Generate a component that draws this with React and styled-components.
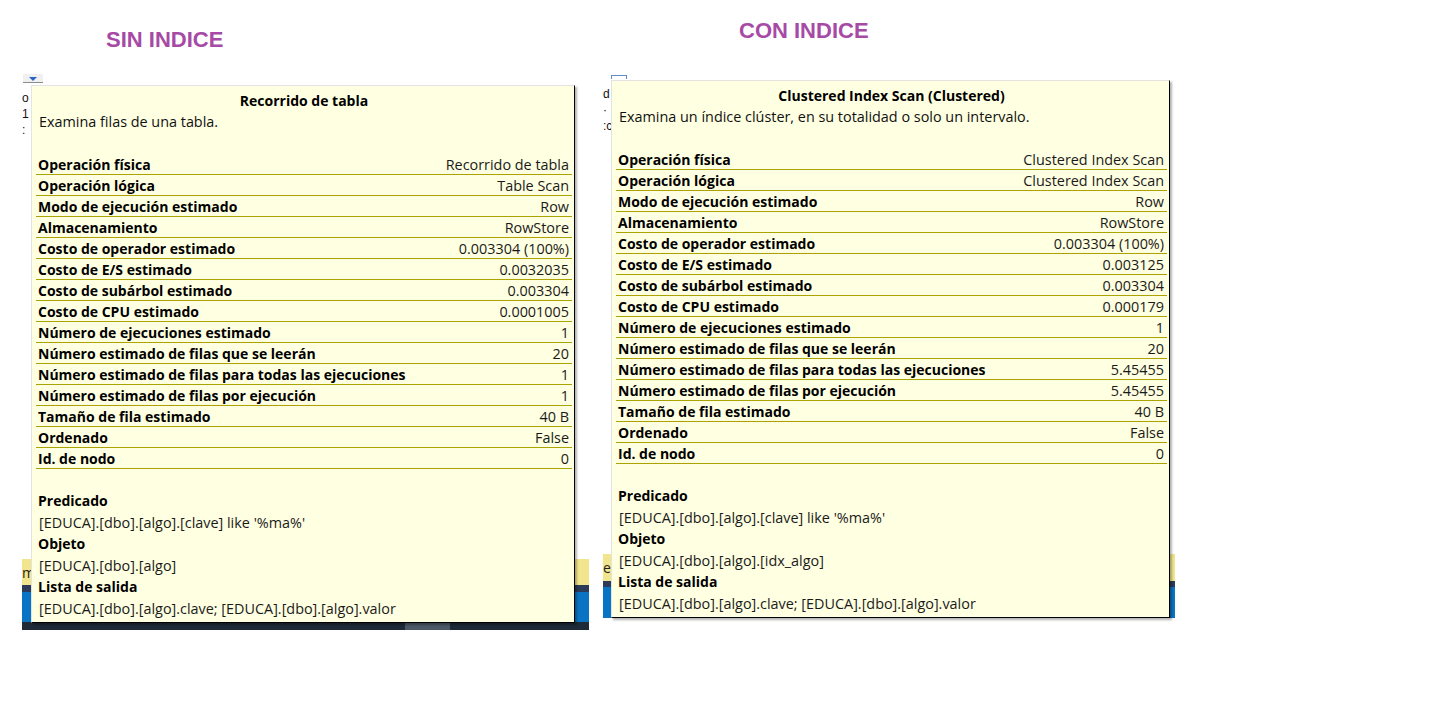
import React from "react";
import styled, { createGlobalStyle } from "styled-components";

const Global = createGlobalStyle`
  html, body { margin: 0; padding: 0; background: #fff; }
  body { font-family: "Open Sans", "Noto Sans", sans-serif; }
`;

const Page = styled.div`
  display: flex;
  align-items: flex-start;
  gap: 14px;
  padding-left: 22px;
  width: 1437px;
  height: 709px;
  box-sizing: border-box;
  overflow: hidden;
`;

const Column = styled.section`
  display: flex;
  flex-direction: column;
  width: ${(p) => p.$width}px;
`;

const HeadingBar = styled.div`
  height: 73px;
  box-sizing: border-box;
  padding-top: ${(p) => p.$top}px;
  padding-left: ${(p) => p.$indent}px;
`;

const Heading = styled.h2`
  margin: 0;
  font-family: "Liberation Sans", Arial, sans-serif;
  font-weight: bold;
  font-size: 22px;
  line-height: 26px;
  color: #a64aa6;
`;

const Frame = styled.div`
  position: relative;
  height: ${(p) => p.$height}px;
  display: flex;
  flex-direction: column;
  background: #fff;
`;

const FrameTop = styled.div`
  flex: 1;
  position: relative;
`;

const DropButton = styled.div`
  width: 20px;
  height: 9px;
  margin: 1px 0 0 1px;
  background: #f0f0f0;
  border-bottom: 1px solid #8c8c8c;
  display: flex;
  justify-content: center;
  align-items: flex-end;
  padding-bottom: 1px;
  box-sizing: border-box;
`;

const Tab = styled.div`
  width: 14px;
  height: 3px;
  margin: 2px 0 0 8px;
  border-top: 1px solid #5b8fd0;
  border-left: 1px solid #5b8fd0;
  border-right: 1px solid #5b8fd0;
`;

const Triangle = styled.span`
  width: 0;
  height: 0;
  border-left: 4px solid transparent;
  border-right: 4px solid transparent;
  border-top: 4px solid #2a64c8;
`;

const Fragments = styled.div`
  width: 9px;
  margin-top: ${(p) => p.$top}px;
  display: flex;
  flex-direction: column;
  gap: 2px;
  font-family: "Liberation Sans", Arial, sans-serif;
  font-size: 12px;
  line-height: 14px;
  color: #111;
  white-space: nowrap;
`;

const Strip = styled.div`
  height: ${(p) => p.$h}px;
  background: ${(p) => p.$c};
  display: flex;
  align-items: center;
  overflow: hidden;
  font-family: "Open Sans", sans-serif;
  font-size: 14px;
  color: #222;
`;

const ScrollTrack = styled.div`
  height: ${(p) => p.$h}px;
  background: #1e2a38;
  display: flex;
`;

const Thumb = styled.div`
  width: 45px;
  margin-left: 383px;
  background: #4c5866;
`;

const Tooltip = styled.div`
  position: absolute;
  left: ${(p) => p.$left}px;
  top: ${(p) => p.$top}px;
  width: ${(p) => p.$width}px;
  height: 538px;
  box-sizing: border-box;
  background: #ffffe1;
  border: 1px solid;
  border-color: #e3e3e3 #000 #000 #e3e3e3;
  box-shadow: 2px 2px 2px rgba(0, 0, 0, 0.3);
  padding: 4px 2px 0 4px;
  font-family: "Open Sans", "Noto Sans", sans-serif;
  font-size: 14.4px;
  color: #111;
`;

const Title = styled.div`
  height: 21px;
  line-height: 21px;
  text-align: center;
  font-weight: bold;
  font-size: 14px;
  color: #000;
`;

const Desc = styled.div`
  height: 21px;
  line-height: 21px;
  padding-left: 3px;
  margin-bottom: 22px;
`;

const PropRow = styled.div`
  display: flex;
  justify-content: space-between;
  align-items: flex-start;
  height: 20px;
  line-height: 22px;
  border-bottom: 1px solid #aca200;
  padding: 0 3px 0 2px;
`;

const Label = styled.span`
  font-weight: bold;
  font-size: 14px;
  color: #000;
`;

const Value = styled.span`
  color: #1a1a1a;
`;

const Section = styled.div`
  margin-top: 21px;
  padding-left: 2px;
  display: flex;
  flex-direction: column;
`;

const SectionLine = styled.div`
  height: 21.5px;
  line-height: 21.5px;
  white-space: nowrap;
  font-weight: ${(p) => (p.$bold ? "bold" : "normal")};
  font-size: ${(p) => (p.$bold ? "14px" : "14.4px")};
  color: ${(p) => (p.$bold ? "#000" : "#1a1a1a")};
  padding-left: ${(p) => (p.$bold ? 0 : 1)}px;
`;

const leftRows = [
  ["Operación física", "Recorrido de tabla"],
  ["Operación lógica", "Table Scan"],
  ["Modo de ejecución estimado", "Row"],
  ["Almacenamiento", "RowStore"],
  ["Costo de operador estimado", "0.003304 (100%)"],
  ["Costo de E/S estimado", "0.0032035"],
  ["Costo de subárbol estimado", "0.003304"],
  ["Costo de CPU estimado", "0.0001005"],
  ["Número de ejecuciones estimado", "1"],
  ["Número estimado de filas que se leerán", "20"],
  ["Número estimado de filas para todas las ejecuciones", "1"],
  ["Número estimado de filas por ejecución", "1"],
  ["Tamaño de fila estimado", "40 B"],
  ["Ordenado", "False"],
  ["Id. de nodo", "0"],
];

const rightRows = [
  ["Operación física", "Clustered Index Scan"],
  ["Operación lógica", "Clustered Index Scan"],
  ["Modo de ejecución estimado", "Row"],
  ["Almacenamiento", "RowStore"],
  ["Costo de operador estimado", "0.003304 (100%)"],
  ["Costo de E/S estimado", "0.003125"],
  ["Costo de subárbol estimado", "0.003304"],
  ["Costo de CPU estimado", "0.000179"],
  ["Número de ejecuciones estimado", "1"],
  ["Número estimado de filas que se leerán", "20"],
  ["Número estimado de filas para todas las ejecuciones", "5.45455"],
  ["Número estimado de filas por ejecución", "5.45455"],
  ["Tamaño de fila estimado", "40 B"],
  ["Ordenado", "False"],
  ["Id. de nodo", "0"],
];

function PlanTooltip({ left, top, width, title, desc, rows, objeto }) {
  return (
    <Tooltip $left={left} $top={top} $width={width}>
      <Title>{title}</Title>
      <Desc>{desc}</Desc>
      {rows.map(([k, v]) => (
        <PropRow key={k}>
          <Label>{k}</Label>
          <Value>{v}</Value>
        </PropRow>
      ))}
      <Section>
        <SectionLine $bold>Predicado</SectionLine>
        <SectionLine>[EDUCA].[dbo].[algo].[clave] like '%ma%'</SectionLine>
        <SectionLine $bold>Objeto</SectionLine>
        <SectionLine>{objeto}</SectionLine>
        <SectionLine $bold>Lista de salida</SectionLine>
        <SectionLine>[EDUCA].[dbo].[algo].clave; [EDUCA].[dbo].[algo].valor</SectionLine>
      </Section>
    </Tooltip>
  );
}

export default function App() {
  return (
    <>
      <Global />
      <Page>
        <Column $width={567}>
          <HeadingBar $top={27} $indent={84}>
            <Heading>SIN INDICE</Heading>
          </HeadingBar>
          <Frame $height={557}>
            <FrameTop>
              <DropButton>
                <Triangle />
              </DropButton>
              <Fragments $top={8}>
                <span>o</span>
                <span>1</span>
                <span>:</span>
              </Fragments>
            </FrameTop>
            <Strip $h={26} $c="#f1e68e">m</Strip>
            <Strip $h={7} $c="#2b3b58" />
            <Strip $h={30} $c="#0a74c4" />
            <ScrollTrack $h={8}>
              <Thumb />
            </ScrollTrack>
            <PlanTooltip
              left={9}
              top={12}
              width={544}
              title="Recorrido de tabla"
              desc="Examina filas de una tabla."
              rows={leftRows}
              objeto="[EDUCA].[dbo].[algo]"
            />
          </Frame>
        </Column>
        <Column $width={572}>
          <HeadingBar $top={18} $indent={136}>
            <Heading>CON INDICE</Heading>
          </HeadingBar>
          <Frame $height={545}>
            <FrameTop>
              <Tab />
              <Fragments $top={8}>
                <span>d</span>
                <span>·</span>
                <span>:c</span>
              </Fragments>
            </FrameTop>
            <Strip $h={27} $c="#f1e68e">e.</Strip>
            <Strip $h={6} $c="#2b3b58" />
            <Strip $h={31} $c="#0a74c4" />
            <PlanTooltip
              left={8}
              top={7}
              width={559}
              title="Clustered Index Scan (Clustered)"
              desc="Examina un índice clúster, en su totalidad o solo un intervalo."
              rows={rightRows}
              objeto="[EDUCA].[dbo].[algo].[idx_algo]"
            />
          </Frame>
        </Column>
      </Page>
    </>
  );
}
